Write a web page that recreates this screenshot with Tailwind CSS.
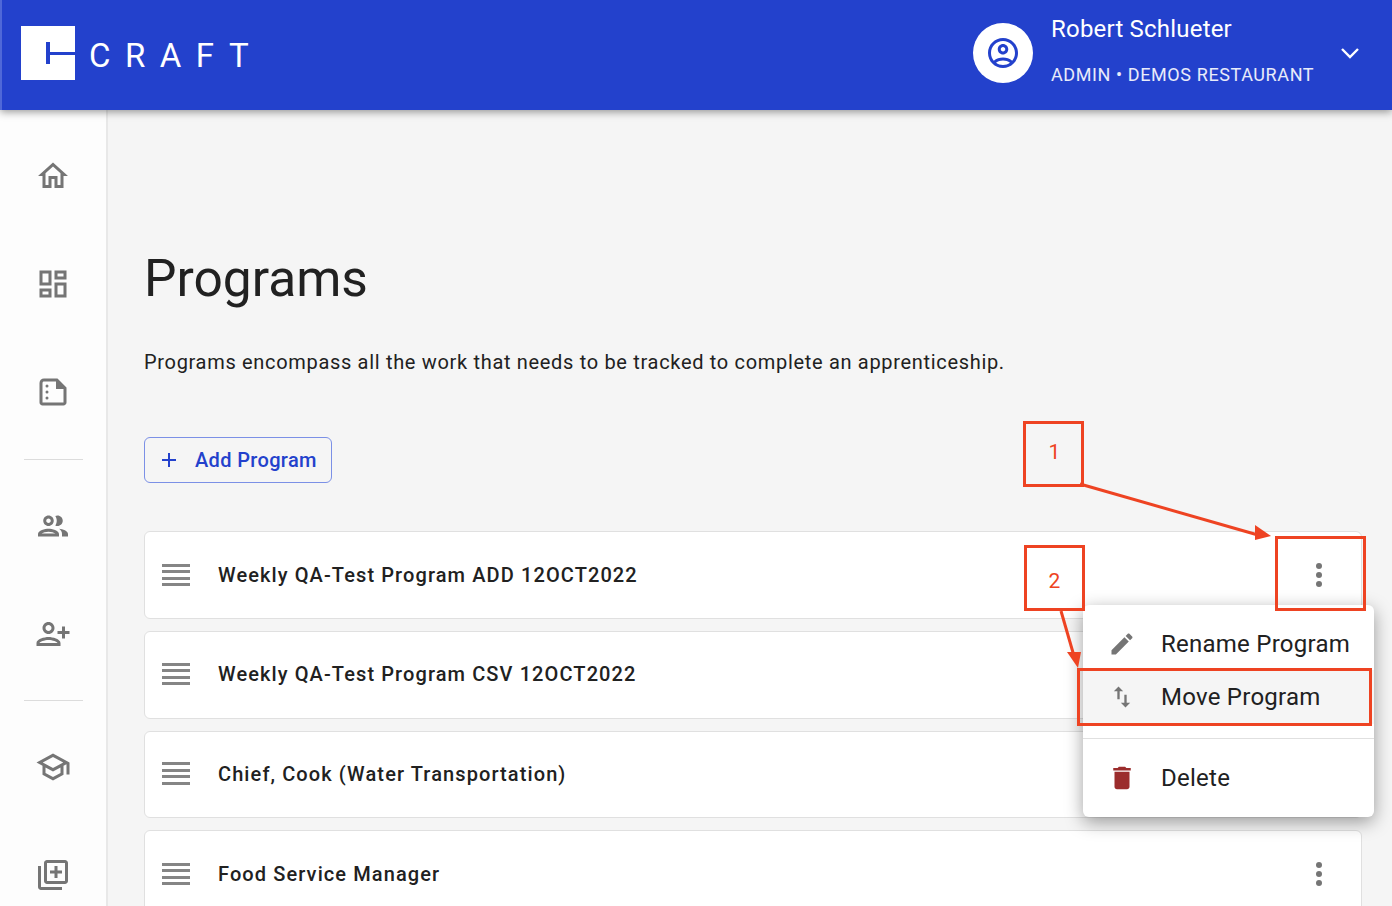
<!DOCTYPE html>
<html lang="en">
<head>
<meta charset="utf-8">
<title>Programs</title>
<script src="https://cdn.jsdelivr.net/npm/@tailwindcss/browser@4"></script>
</head>
<body class="font-[Roboto,sans-serif] bg-[#f5f5f5] text-[#212121]">
<div class="relative flex h-[906px] w-[1392px] flex-col overflow-hidden">
  <header class="relative z-10 flex h-[110px] shrink-0 items-center justify-between border-l-2 border-[#4f68d8] bg-[#2341cc] pl-[19px] pr-[30px] shadow-[0_2px_8px_rgba(0,0,0,0.4)]">
    <div class="flex items-center">
      <svg class="mb-[4px] h-[54px] w-[54px]" viewBox="0 0 54 54"><rect width="54" height="54" fill="#fff"/><path d="M25 16h4v10h25v3H29v9h-4z" fill="#2341cc"/></svg>
      <span class="ml-[14px] text-[33px] leading-none font-normal tracking-[14.5px] text-white">CRAFT</span>
    </div>
    <div class="flex items-center pb-[4px] pr-[0px]">
      <div class="flex h-[60px] w-[60px] items-center justify-center rounded-full bg-white">
        <svg class="h-9 w-9 fill-[#2341cc]" viewBox="0 0 24 24"><path d="M12 2C6.48 2 2 6.48 2 12s4.48 10 10 10 10-4.48 10-10S17.52 2 12 2zM7.35 18.5C8.66 17.56 10.26 17 12 17s3.34.56 4.65 1.5C15.34 19.44 13.74 20 12 20s-3.34-.56-4.65-1.5zm10.79-1.38C16.45 15.8 14.32 15 12 15s-4.45.8-6.14 2.12C4.7 15.73 4 13.95 4 12c0-4.42 3.58-8 8-8s8 3.58 8 8c0 1.95-.7 3.73-1.86 5.12zM12 6c-1.93 0-3.5 1.57-3.5 3.5S10.07 13 12 13s3.5-1.57 3.5-3.5S13.93 6 12 6zm0 5c-.83 0-1.5-.67-1.5-1.5S11.17 8 12 8s1.5.67 1.5 1.5S12.83 11 12 11z"/></svg>
      </div>
      <div class="mb-[7px] ml-[18px] flex w-[287px] flex-col text-white">
        <span class="text-[24px] leading-[28px] tracking-[0.2px]">Robert Schlueter</span>
        <span class="mt-[22px] text-[18px] leading-[20px] tracking-[0.6px] text-white/90">ADMIN • DEMOS RESTAURANT</span>
      </div>
      <svg class="h-6 w-6" fill="none" stroke="#fff" stroke-width="2.4" viewBox="0 0 24 24"><path d="M4 8l8 8 8-8"/></svg>
    </div>
  </header>
  <div class="flex min-h-0 flex-1">
    <nav class="flex w-[108px] shrink-0 flex-col items-center border-r-2 border-[#e8e8e8] bg-[#fdfdfd] fill-[#757575]">
      <svg class="mt-[48px] h-9 w-9" viewBox="0 0 24 24"><path d="M12 5.69l5 4.5V18h-2v-6H9v6H7v-7.81l5-4.5M12 3L2 12h3v8h6v-6h2v6h6v-8h3L12 3z"/></svg>
      <svg class="mt-[72px] h-9 w-9" viewBox="0 0 24 24"><path d="M19 5v2h-4V5h4M9 5v6H5V5h4m10 8v6h-4v-6h4M9 17v2H5v-2h4M21 3h-8v6h8V3zM11 3H3v10h8V3zm10 8h-8v10h8V11zm-10 4H3v6h8v-6z"/></svg>
      <svg class="mt-[72px] h-9 w-9" viewBox="0 0 24 24"><path d="M6 3h9l6 6v10c0 1.1-.9 2-2 2H5c-1.1 0-2-.9-2-2V6c0-1.7 1.3-3 3-3zm0 2c-.6 0-1 .4-1 1v13h14V10h-5V5H6z"/><circle cx="8" cy="8" r="1"/><circle cx="8" cy="12" r="1"/><circle cx="8" cy="16" r="1"/></svg>
      <div class="mt-[49px] h-px w-[59px] bg-[#dcdcdc]"></div>
      <svg class="mt-[48px] h-9 w-9" viewBox="0 0 24 24"><path d="M9 13.75c-2.34 0-7 1.17-7 3.5V19h14v-1.75c0-2.33-4.66-3.5-7-3.5zM4.34 17c.84-.58 2.87-1.25 4.66-1.25s3.82.67 4.66 1.25H4.34zM9 12c1.93 0 3.5-1.57 3.5-3.5S10.93 5 9 5 5.5 6.57 5.5 8.5 7.07 12 9 12zm0-5c.83 0 1.5.67 1.5 1.5S9.83 10 9 10s-1.5-.67-1.5-1.5S8.17 7 9 7zm7.04 6.81c1.16.84 1.96 1.96 1.96 3.44V19h4v-1.75c0-2.02-3.5-3.17-5.96-3.44zM15 12c1.93 0 3.5-1.57 3.5-3.5S16.93 5 15 5c-.54 0-1.04.13-1.5.35.63.89 1 1.98 1 3.15s-.37 2.26-1 3.15c.46.22.96.35 1.5.35z"/></svg>
      <svg class="mt-[72px] h-9 w-9 -scale-x-100" viewBox="0 0 24 24"><path d="M15 12c2.21 0 4-1.79 4-4s-1.79-4-4-4-4 1.79-4 4 1.79 4 4 4zm0-6c1.1 0 2 .9 2 2s-.9 2-2 2-2-.9-2-2 .9-2 2-2zm0 8c-2.67 0-8 1.34-8 4v2h16v-2c0-2.66-5.33-4-8-4zm-6 4c.22-.72 3.31-2 6-2 2.7 0 5.8 1.29 6 2H9zm-3-3v-3h3v-2H6V7H4v3H1v2h3v3h2z"/></svg>
      <div class="mt-[48px] h-px w-[59px] bg-[#dcdcdc]"></div>
      <svg class="mt-[48px] h-9 w-9" viewBox="0 0 24 24"><path d="M12 3L1 9l4 2.18v6L12 21l7-3.82v-6l2-1.09V17h2V9L12 3zm6.82 6L12 12.72 5.18 9 12 5.28 18.82 9zM17 15.99l-5 2.73-5-2.73v-3.72L12 15l5-2.73v3.72z"/></svg>
      <svg class="mt-[72px] h-9 w-9" viewBox="0 0 24 24"><path d="M4 6H2v14c0 1.1.9 2 2 2h14v-2H4V6zm16-4H8c-1.1 0-2 .9-2 2v12c0 1.1.9 2 2 2h12c1.1 0 2-.9 2-2V4c0-1.1-.9-2-2-2zm0 14H8V4h12v12zm-7-2h2v-3h3V9h-3V6h-2v3h-3v2h3z"/></svg>
    </nav>
    <main class="min-w-0 flex-1 pl-[36px] pr-[30px]">
      <h1 class="mt-[139px] text-[51.5px] leading-[60px] font-normal">Programs</h1>
      <p class="mt-[39px] text-[20px] leading-[28px] tracking-[0.68px]">Programs encompass all the work that needs to be tracked to complete an apprenticeship.</p>
      <button class="mt-[61px] flex h-[46px] w-[188px] items-center rounded-md border border-[#7b90e6] pl-[12px] text-[20px] font-medium tracking-[0.35px] text-[#2341cc]">
        <svg class="h-6 w-6 fill-[#2341cc]" viewBox="0 0 24 24"><path d="M19 13h-6v6h-2v-6H5v-2h6V5h2v6h6v2z"/></svg>
        <span class="ml-[14px]">Add Program</span>
      </button>
      <ul class="mt-[48px] flex flex-col gap-3">
        <li class="flex h-[88px] items-center rounded-md border border-[#e0e0e0] bg-white pl-[17px] pr-[30px]">
          <div class="flex w-7 flex-col gap-[3.5px]"><i class="h-[3px] bg-[#858585]"></i><i class="h-[3px] bg-[#858585]"></i><i class="h-[3px] bg-[#858585]"></i><i class="h-[3px] bg-[#858585]"></i></div>
          <span class="ml-[28px] flex-1 text-[20px] font-medium tracking-[1.1px]">Weekly QA-Test Program ADD 12OCT2022</span>
          <svg class="h-6 w-6 fill-[#757575]" viewBox="0 0 24 24"><circle cx="12" cy="3" r="3"/><circle cx="12" cy="12" r="3"/><circle cx="12" cy="21" r="3"/></svg>
        </li>
        <li class="flex h-[88px] items-center rounded-md border border-[#e0e0e0] bg-white pb-[2px] pl-[17px] pr-[30px]">
          <div class="flex w-7 flex-col gap-[3.5px]"><i class="h-[3px] bg-[#858585]"></i><i class="h-[3px] bg-[#858585]"></i><i class="h-[3px] bg-[#858585]"></i><i class="h-[3px] bg-[#858585]"></i></div>
          <span class="ml-[28px] flex-1 text-[20px] font-medium tracking-[1.1px]">Weekly QA-Test Program CSV 12OCT2022</span>
        </li>
        <li class="flex h-[87px] items-center rounded-md border border-[#e0e0e0] bg-white pb-[2px] pl-[17px] pr-[30px]">
          <div class="flex w-7 flex-col gap-[3.5px]"><i class="h-[3px] bg-[#858585]"></i><i class="h-[3px] bg-[#858585]"></i><i class="h-[3px] bg-[#858585]"></i><i class="h-[3px] bg-[#858585]"></i></div>
          <span class="ml-[28px] flex-1 text-[20px] font-medium tracking-[1.1px]">Chief, Cook (Water Transportation)</span>
        </li>
        <li class="flex h-[88px] items-center rounded-md border border-[#e0e0e0] bg-white pl-[17px] pr-[30px]">
          <div class="flex w-7 flex-col gap-[3.5px]"><i class="h-[3px] bg-[#858585]"></i><i class="h-[3px] bg-[#858585]"></i><i class="h-[3px] bg-[#858585]"></i><i class="h-[3px] bg-[#858585]"></i></div>
          <span class="ml-[28px] flex-1 text-[20px] font-medium tracking-[1.1px]">Food Service Manager</span>
          <svg class="h-6 w-6 fill-[#757575]" viewBox="0 0 24 24"><circle cx="12" cy="3" r="3"/><circle cx="12" cy="12" r="3"/><circle cx="12" cy="21" r="3"/></svg>
        </li>
      </ul>
    </main>
  </div>

  <!-- dropdown menu over the list -->
  <div class="absolute left-[1083px] top-[605px] z-20 flex h-[212px] w-[291px] flex-col rounded-md bg-white pt-[12px] text-[24px] tracking-[0.25px] shadow-[0_5px_18px_rgba(0,0,0,0.38)]">
    <div class="flex h-[53px] items-center pl-[25px]">
      <svg class="h-7 w-7 fill-[#757575]" viewBox="0 0 24 24"><path d="M3 17.25V21h3.75L17.81 9.94l-3.75-3.75L3 17.25zM20.71 7.04c.39-.39.39-1.02 0-1.41l-2.34-2.34c-.39-.39-1.02-.39-1.41 0l-1.83 1.83 3.75 3.75 1.83-1.83z"/></svg>
      <span class="ml-[25px]">Rename Program</span>
    </div>
    <div class="flex h-[54px] items-center bg-[#f5f5f5] pl-[25px]">
      <svg class="h-7 w-7 fill-[#757575]" viewBox="0 0 24 24"><path d="M16 17.01V10h-2v7.01h-3L15 21l4-3.99h-3zM9 3L5 6.99h3V14h2V6.99h3L9 3z"/></svg>
      <span class="ml-[25px]">Move Program</span>
    </div>
    <div class="mt-[14px] h-px bg-[#e0e0e0]"></div>
    <div class="mt-[12px] flex h-[54px] items-center pl-[24px]">
      <svg class="h-[30px] w-[30px] fill-[#9b2c2c]" viewBox="0 0 24 24"><path d="M6 19c0 1.1.9 2 2 2h8c1.1 0 2-.9 2-2V7H6v12zM19 4h-3.5l-1-1h-5l-1 1H5v2h14V4z"/></svg>
      <span class="ml-[24px]">Delete</span>
    </div>
  </div>

  <!-- annotations -->
  <div class="absolute left-[1023px] top-[421px] z-30 flex h-[66px] w-[61px] items-center justify-center border-[3px] border-[#ee4322] pb-[2px] pl-[2px] text-[21px] text-[#ee4322]">1</div>
  <div class="absolute left-[1024px] top-[545px] z-30 flex h-[66px] w-[61px] items-center justify-center border-[3px] border-[#ee4322] pt-[8px] text-[21px] text-[#ee4322]">2</div>
  <div class="absolute left-[1275px] top-[536px] z-30 h-[75px] w-[91px] border-[3px] border-[#ee4322]"></div>
  <div class="absolute left-[1077px] top-[668px] z-30 h-[58px] w-[295px] border-[3px] border-[#ee4322]"></div>
  <svg class="pointer-events-none absolute left-0 top-0 z-30 h-[906px] w-[1392px]" viewBox="0 0 1392 906">
    <path d="M1080 484L1258 535" stroke="#ee4322" stroke-width="3" fill="none"/>
    <path d="M1271 536L1255 525L1255 540Z" fill="#ee4322"/>
    <path d="M1061 611L1074 656" stroke="#ee4322" stroke-width="3" fill="none"/>
    <path d="M1078 668L1067 652L1081 652Z" fill="#ee4322"/>
  </svg>
</div>
</body>
</html>
